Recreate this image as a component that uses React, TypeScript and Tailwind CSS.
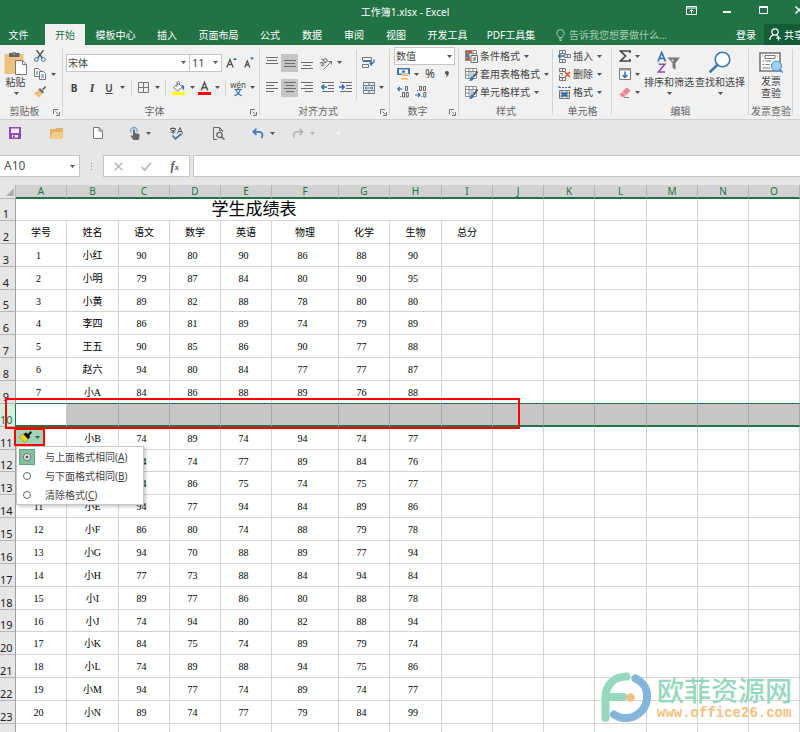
import type { ReactNode } from "react";

type Score = { row: number; id: number; name: string; marks: number[] };

const SCORES: Score[] = [
  { row: 3, id: 1, name: "小红", marks: [90, 80, 90, 86, 88, 90] },
  { row: 4, id: 2, name: "小明", marks: [79, 87, 84, 80, 90, 95] },
  { row: 5, id: 3, name: "小黄", marks: [89, 82, 88, 78, 80, 80] },
  { row: 6, id: 4, name: "李四", marks: [86, 81, 89, 74, 79, 89] },
  { row: 7, id: 5, name: "王五", marks: [90, 85, 86, 90, 77, 88] },
  { row: 8, id: 6, name: "赵六", marks: [94, 80, 84, 77, 77, 87] },
  { row: 9, id: 7, name: "小A", marks: [84, 86, 88, 89, 76, 88] },
  { row: 11, id: 8, name: "小B", marks: [74, 89, 74, 94, 74, 77] },
  { row: 12, id: 9, name: "小C", marks: [74, 74, 77, 89, 84, 76] },
  { row: 13, id: 10, name: "小D", marks: [74, 86, 75, 74, 75, 77] },
  { row: 14, id: 11, name: "小E", marks: [94, 77, 94, 84, 89, 86] },
  { row: 15, id: 12, name: "小F", marks: [86, 80, 74, 88, 79, 78] },
  { row: 16, id: 13, name: "小G", marks: [94, 70, 88, 89, 77, 94] },
  { row: 17, id: 14, name: "小H", marks: [77, 73, 88, 84, 94, 84] },
  { row: 18, id: 15, name: "小I", marks: [89, 77, 86, 80, 88, 78] },
  { row: 19, id: 16, name: "小J", marks: [74, 94, 80, 82, 88, 94] },
  { row: 20, id: 17, name: "小K", marks: [84, 75, 74, 89, 79, 74] },
  { row: 21, id: 18, name: "小L", marks: [74, 89, 88, 94, 75, 86] },
  { row: 22, id: 19, name: "小M", marks: [94, 77, 74, 89, 74, 77] },
  { row: 23, id: 20, name: "小N", marks: [89, 74, 77, 79, 84, 99] },
];

const COLUMNS = [
  { id: "A", w: "w-[51px]" },
  { id: "B", w: "w-[52px]" },
  { id: "C", w: "w-[51px]" },
  { id: "D", w: "w-[51px]" },
  { id: "E", w: "w-[51px]" },
  { id: "F", w: "w-[67px]" },
  { id: "G", w: "w-[51px]" },
  { id: "H", w: "w-[52px]" },
  { id: "I", w: "w-[51px]" },
  { id: "J", w: "w-[51px]" },
  { id: "K", w: "w-[51px]" },
  { id: "L", w: "w-[52px]" },
  { id: "M", w: "w-[51px]" },
  { id: "N", w: "w-[51px]" },
  { id: "O", w: "w-[51px]" },
];

const HEADINGS = ["学号", "姓名", "语文", "数学", "英语", "物理", "化学", "生物", "总分"];
const ROWS = Array.from({ length: 24 }, (_, i) => i + 1);
const SHORT_ROWS = [1, 5, 12, 19];
const SELECTED_ROW = 10;

const TABS = [
  { label: "文件", w: "w-[45px] pr-2" },
  { label: "开始", w: "w-[40px]", active: true },
  { label: "模板中心", w: "w-[61px]" },
  { label: "插入", w: "w-[42px]" },
  { label: "页面布局", w: "w-[61px]" },
  { label: "公式", w: "w-[42px]" },
  { label: "数据", w: "w-[42px]" },
  { label: "审阅", w: "w-[42px]" },
  { label: "视图", w: "w-[42px]" },
  { label: "开发工具", w: "w-[61px]" },
  { label: "PDF工具集", w: "w-[66px]" },
];

function Caret({ className = "text-[#555]" }: { className?: string }) {
  return (
    <svg width="5" height="3" viewBox="0 0 5 3" className={`shrink-0 ${className}`} aria-hidden="true">
      <path d="M0 0h5L2.5 3z" fill="currentColor" />
    </svg>
  );
}

function Tool({ label, w, on, children }: { label: string; w: string; on?: boolean; children: ReactNode }) {
  return (
    <button
      type="button"
      aria-label={label}
      className={`flex h-[18px] shrink-0 items-center justify-center ${w} ${on ? "bg-[#c5c5c5]" : ""}`}
    >
      {children}
    </button>
  );
}

function Divider({ w }: { w: string }) {
  return (
    <span className={`flex h-4 shrink-0 justify-center ${w}`}>
      <span className="w-px bg-[#d4d4d4]" />
    </span>
  );
}

function Group({
  title,
  w,
  launcher,
  children,
}: {
  title: string;
  w: string;
  launcher?: boolean;
  children: ReactNode;
}) {
  return (
    <section aria-label={title} className={`relative flex shrink-0 flex-col ${w}`}>
      <div className="h-[57px]">{children}</div>
      <div className="flex h-[17px] items-center text-[#666]">
        <span className="flex-1 text-center whitespace-nowrap">{title}</span>
        {launcher && (
          <button type="button" aria-label={`${title}设置`} className="flex w-[14px] justify-center pt-1">
            <svg width="7" height="7" viewBox="0 0 7 7" fill="none" stroke="#777">
              <path d="M.5 5V.5H5M2.5 2.5l3 3M6.5 3v3.500H3" />
            </svg>
          </button>
        )}
      </div>
      <span className="absolute top-1 right-0 bottom-1 w-px bg-[#d4d4d4]" />
    </section>
  );
}

function Lines({ widths, align }: { widths: number[]; align: "l" | "c" | "r" }) {
  return (
    <svg width="12" height="11" viewBox="0 0 12 11" stroke="#6b6b6b" aria-hidden="true">
      {widths.map((len, i) => {
        const x = align === "l" ? 0 : align === "r" ? 12 - len : (12 - len) / 2;
        return len ? <path key={i} d={`M${x} ${i * 3 + 0.5}h${len}`} /> : null;
      })}
    </svg>
  );
}

function GridIcon({ brush, hot }: { brush?: boolean; hot?: boolean }) {
  return (
    <svg width="13" height="13" viewBox="0 0 13 13" fill="none" aria-hidden="true">
      <path d="M.5.5h11v10H.5zM.5 3.500h11M.5 7h11M4 .5v10M8 .5v10" fill="#fff" stroke="#8a8a8a" />
      {hot && (
        <>
          <path d="M1 1h6v2H1z" fill="#d9502e" />
          <path d="M1 4h3v3H1z" fill="#3c78b8" />
          <path d="M1 7.500h4v2.500H1z" fill="#d9502e" />
          <path d="M6 5.500h6.500v7H6z" fill="#fff" stroke="#666" />
          <path d="M7.500 8h3.500M7.500 10h3.500M10.500 6.800l-2 4.500" stroke="#555" strokeWidth=".8" />
        </>
      )}
      {brush && (
        <>
          <path d="M4.500 4h5l-3 6h-2z" fill="#b7d2ec" />
          <path d="M12.500 3.500L8.500 9" stroke="#555" strokeWidth="1.800" />
          <path d="M4 12.800c2 .2 4.500-.3 5-2.800L7 8.300C5.500 9 6 11.500 4 12.800z" fill="#2f6fb3" />
        </>
      )}
    </svg>
  );
}

function CellsIcon({ kind }: { kind: "insert" | "delete" | "format" }) {
  if (kind === "format") {
    return (
      <svg width="13" height="13" viewBox="0 0 13 13" fill="none" aria-hidden="true">
        <path d="M1 1.500h11M1 0v3M12 0v3" stroke="#2f6fb3" strokeDasharray="2 1" />
        <path d="M1.500 4.500h10v8h-10zM1.500 7h10M1.500 10h10M4 4.500v8M9 4.500v8" stroke="#777" />
        <path d="M4 6.500h5v4H4z" fill="#2f6fb3" />
      </svg>
    );
  }
  return (
    <svg width="13" height="13" viewBox="0 0 13 13" fill="none" aria-hidden="true">
      <path d="M1.500.5h6v3h-6zM4.500.5v3M1.500 9.500h6v3h-6zM4.500 9.500v3M1.500 7v2.500" stroke="#777" />
      {kind === "insert" ? (
        <>
          <path d="M6.500 4.500h6v3h-6zM9.500 4.500v3" stroke="#777" />
          <path d="M0 6h6M2.500 3.800L.5 6l2 2.200" stroke="#2f6fb3" strokeWidth="1.300" />
        </>
      ) : (
        <>
          <path d="M1.500 5.500h3v2" stroke="#777" />
          <path d="M7 4l5 5M12 4L7 9" stroke="#d9502e" strokeWidth="1.500" />
        </>
      )}
    </svg>
  );
}

function RowButton({ icon, label }: { icon: ReactNode; label: string }) {
  return (
    <button type="button" className="flex h-[18px] items-center gap-[2px] whitespace-nowrap">
      {icon}
      <span>{label}</span>
      <span className="pl-[2px]">
        <Caret />
      </span>
    </button>
  );
}

function TitleBar() {
  return (
    <div className="flex h-6 items-center overflow-hidden text-white">
      <span className="w-[137px] shrink-0" />
      <h1 className="flex-1 text-center text-[10px]">工作簿1.xlsx - Excel</h1>
      <div className="-mr-[17px] flex shrink-0 pb-1">
        <Tool label="功能区显示选项" w="w-[36px]">
          <svg width="11" height="9" viewBox="0 0 11 9" fill="none" stroke="#fff">
            <path d="M.5.500h10v8H.5zM.5 2h10M5.500 7.500V4M3.500 5.500l2-2 2 2" />
          </svg>
        </Tool>
        <Tool label="最小化" w="w-[36px]">
          <svg width="8" height="6" viewBox="0 0 8 6">
            <path d="M0 4h8v2H0z" fill="#fff" />
          </svg>
        </Tool>
        <Tool label="最大化" w="w-[36px]">
          <svg width="9" height="8" viewBox="0 0 9 8" fill="none" stroke="#fff">
            <path d="M.5.500h8v7h-8zM.5 1.500h8" />
          </svg>
        </Tool>
        <Tool label="关闭" w="w-[36px]">
          <svg width="8" height="8" viewBox="0 0 8 8" stroke="#fff" strokeWidth="1.500">
            <path d="M.5.500l7 7M7.500.500l-7 7" />
          </svg>
        </Tool>
      </div>
    </div>
  );
}

function TabBar() {
  return (
    <nav className="flex h-[21px] items-stretch overflow-hidden text-white">
      {TABS.map((t) => (
        <button
          key={t.label}
          type="button"
          className={`shrink-0 whitespace-nowrap ${t.w} ${t.active ? "bg-[#f1f1f1] text-[#217346]" : ""}`}
        >
          {t.label}
        </button>
      ))}
      <label className="flex flex-1 items-center gap-1 pl-[12px]">
        <svg width="9" height="12" viewBox="0 0 9 12" fill="none" stroke="#a5cdb5">
          <path d="M2.800 8.500C2.800 7 .8 6.300.8 4.200a3.700 3.700 0 017.400 0c0 2.100-2 2.800-2 4.300zM3 10h3M3.500 11.500h2" />
        </svg>
        <input
          aria-label="操作说明搜索"
          placeholder="告诉我您想要做什么..."
          className="w-[120px] bg-transparent outline-none placeholder:text-[#a5cdb5]"
        />
      </label>
      <button type="button" className="w-[36px] shrink-0">
        登录
      </button>
      <button
        type="button"
        className="flex w-[36px] shrink-0 items-center gap-[3px] overflow-hidden bg-[#125c36] pl-[5px] whitespace-nowrap"
      >
        <svg width="12" height="13" viewBox="0 0 12 13" fill="none" stroke="#fff" strokeWidth="1.200" className="shrink-0">
          <circle cx="6" cy="4" r="3.200" />
          <path d="M.8 12c0-3 1.500-4.300 3.500-5M7.500 7.200l1.500 1M9.500 8v4.500M7.300 10.200h4.500" />
        </svg>
        <span>共享</span>
      </button>
    </nav>
  );
}

function ClipboardGroup() {
  return (
    <Group title="剪贴板" w="w-[63px]" launcher>
      <div className="flex pt-[2px]">
        <button type="button" className="flex w-[31px] flex-col items-center pt-1">
          <svg width="23" height="24" viewBox="0 0 23 24" aria-hidden="true">
            <path d="M.5 3h19v20H.5z" fill="#ecc27c" />
            <path d="M5 2h3.500a2 2 0 013.500 0h3.500v4H5z" fill="#666" />
            <path d="M9.500 2.500h1v1h-1z" fill="#fff" />
            <path d="M11.500 9.500h7l4 4v10h-11z" fill="#fff" stroke="#777" />
            <path d="M18.500 9.500v4h4" fill="none" stroke="#777" />
          </svg>
          <span className="leading-[14px]">粘贴</span>
          <span className="flex h-2 items-center pl-px">
            <Caret />
          </span>
        </button>
        <div className="flex flex-col">
          <Tool label="剪切" w="w-[18px]">
            <svg width="12" height="12" viewBox="0 0 12 12" fill="none">
              <path d="M2.500 0l5.800 8M9.500 0L3.700 8" stroke="#555" strokeWidth="1.400" />
              <circle cx="2.500" cy="9.500" r="1.900" stroke="#2f6fb3" />
              <circle cx="9.300" cy="9.500" r="1.900" stroke="#2f6fb3" />
            </svg>
          </Tool>
          <div className="flex items-center">
            <Tool label="复制" w="w-[18px]">
              <svg width="12" height="12" viewBox="0 0 12 12" fill="#fff" stroke="#777">
                <path d="M.5.500h4l2 2v6h-6z" />
                <path d="M5.500 3.500h4l2 2v6h-6z" />
                <path d="M2 4h2M2 6h2M7 7h3M7 9h3" stroke="#2f6fb3" />
              </svg>
            </Tool>
            <span className="pl-[2px]">
              <Caret />
            </span>
          </div>
          <Tool label="格式刷" w="w-[18px]">
            <svg width="12" height="12" viewBox="0 0 12 12">
              <path d="M0 7l5-3 3.500 3.500L4.500 12z" fill="#ecc27c" />
              <path d="M4.500 3.500L6 2l4 4-1.500 1.500zM8 3l3-3 1.200 1.200-3 3z" fill="#666" />
            </svg>
          </Tool>
        </div>
      </div>
    </Group>
  );
}

function FontGroup() {
  return (
    <Group title="字体" w="w-[197px]" launcher>
      <div className="flex flex-col pt-[5px]">
        <div className="flex h-[25px] items-center pl-[3px]">
          <span className="flex h-[18px] w-[124px] items-center border border-[#c6c6c6] bg-white pr-[3px]">
            <select aria-label="字体" defaultValue="宋体" className="min-w-0 flex-1 appearance-none pl-px outline-none">
              <option>宋体</option>
            </select>
            <Caret />
          </span>
          <span className="flex h-[18px] w-[32px] items-center border border-l-0 border-[#c6c6c6] bg-white pr-[3px]">
            <select aria-label="字号" defaultValue="11" className="min-w-0 flex-1 appearance-none pl-[2px] text-[11px] outline-none">
              <option>11</option>
            </select>
            <Caret />
          </span>
          <Tool label="增大字号" w="w-[18px]">
            <svg width="11" height="11" viewBox="0 0 11 11" fill="none">
              <path d="M.8 10.500L4 2.500l3.200 8M2 7.500h4" stroke="#555" strokeWidth="1.300" />
              <path d="M7 3l2-2.500L11 3z" fill="#2f6fb3" />
            </svg>
          </Tool>
          <Tool label="减小字号" w="w-[18px]">
            <svg width="10" height="11" viewBox="0 0 10 11" fill="none">
              <path d="M.8 10.500l2.500-6.500 2.500 6.500M1.500 8h3.500" stroke="#555" strokeWidth="1.300" />
              <path d="M6 .5h4L8 3z" fill="#2f6fb3" />
            </svg>
          </Tool>
        </div>
        <div className="flex h-[25px] items-center pl-[2px]">
          <Tool label="加粗" w="w-[18px]">
            <b>B</b>
          </Tool>
          <Tool label="倾斜" w="w-[18px]">
            <i className="font-['Liberation_Serif',serif] text-[12px] font-bold">I</i>
          </Tool>
          <Tool label="下划线" w="w-[16px]">
            <u className="font-semibold">U</u>
          </Tool>
          <Tool label="下划线类型" w="w-[10px]">
            <Caret />
          </Tool>
          <Divider w="w-[8px]" />
          <Tool label="边框" w="w-[16px]">
            <svg width="11" height="11" viewBox="0 0 11 11" fill="none" stroke="#777">
              <path d="M.5.500h10v10H.5zM5.500.500v10M.5 5.500h10" />
            </svg>
          </Tool>
          <Tool label="边框类型" w="w-[12px]">
            <Caret />
          </Tool>
          <Divider w="w-[5px]" />
          <Tool label="填充颜色" w="w-[20px]">
            <svg width="13" height="14" viewBox="0 0 13 14" fill="none">
              <path d="M6 2.500L1.500 6.500l4 3.500 5-4z" fill="#fff" stroke="#777" />
              <path d="M5 6V2c0-2 2.500-2 2.500 0v2" stroke="#777" />
              <path d="M10 4c2 0 2.500 2 2 5-1 0-1.500-2-2-3z" fill="#2f6fb3" />
              <path d="M0 11h13v3H0z" fill="#ff0" />
            </svg>
          </Tool>
          <Tool label="填充颜色选项" w="w-[8px]">
            <Caret />
          </Tool>
          <Tool label="字体颜色" w="w-[16px]">
            <svg width="13" height="14" viewBox="0 0 13 14" fill="none">
              <path d="M3.200 9.500l3.300-8 3.300 8M4.500 6.800h4" stroke="#555" strokeWidth="1.500" />
              <path d="M0 11h13v3H0z" fill="#f00" />
            </svg>
          </Tool>
          <Tool label="字体颜色选项" w="w-[10px]">
            <Caret />
          </Tool>
          <Divider w="w-[6px]" />
          <Tool label="拼音指南" w="w-[20px]">
            <span className="flex flex-col items-center text-[8px] leading-[7px]">
              <span>wén</span>
              <span className="font-bold text-[#2f6fb3]">文</span>
            </span>
          </Tool>
          <Tool label="拼音选项" w="w-[8px]">
            <Caret />
          </Tool>
        </div>
      </div>
    </Group>
  );
}

function IndentIcon({ out }: { out?: boolean }) {
  return (
    <svg width="13" height="11" viewBox="0 0 13 11" fill="none" aria-hidden="true">
      <path d="M1 .5h12M7 3.500h6M7 6.500h6M1 9.500h12" stroke="#6b6b6b" />
      <path d={out ? "M6 5H1M3 2.500L.8 5 3 7.500" : "M0 5h5M3 2.500L5.200 5 3 7.500"} stroke="#2f6fb3" strokeWidth="1.500" />
    </svg>
  );
}

function AlignGroup() {
  return (
    <Group title="对齐方式" w="w-[130px]" launcher>
      <div className="flex pt-[5px]">
        <div className="flex w-[96px] flex-col pl-[3px]">
          <div className="flex h-[25px] items-center">
            <Tool label="顶端对齐" w="w-[18px]">
              <Lines widths={[12, 10, 12, 0]} align="c" />
            </Tool>
            <Tool label="垂直居中" w="w-[17px]" on>
              <Lines widths={[0, 12, 10, 12]} align="c" />
            </Tool>
            <Tool label="底端对齐" w="w-[17px]">
              <svg width="12" height="12" viewBox="0 0 12 12" stroke="#6b6b6b">
                <path d="M0 5.500h12M2 8.500h8M0 11.500h12" />
              </svg>
            </Tool>
            <Tool label="方向" w="w-[22px]">
              <svg width="14" height="14" viewBox="0 0 14 14" fill="none">
                <path d="M4.500 13.500L12.500 5.500M9.500 5.500h3v3" stroke="#777" />
                <text x="0" y="8" fontSize="8" fill="#444" transform="rotate(-45 5 6)">
                  ab
                </text>
              </svg>
            </Tool>
            <Caret />
          </div>
          <div className="flex h-[25px] items-center">
            <Tool label="左对齐" w="w-[18px]">
              <Lines widths={[12, 8, 12, 8]} align="l" />
            </Tool>
            <Tool label="居中" w="w-[17px]" on>
              <Lines widths={[12, 8, 12, 8]} align="c" />
            </Tool>
            <Tool label="右对齐" w="w-[17px]">
              <Lines widths={[12, 8, 12, 8]} align="r" />
            </Tool>
            <Tool label="减少缩进量" w="w-[24px]">
              <IndentIcon out />
            </Tool>
            <Tool label="增加缩进量" w="w-[13px]">
              <IndentIcon />
            </Tool>
          </div>
        </div>
        <div className="flex-1 border-l border-[#d4d4d4]">
          <div className="flex h-[25px] items-center pl-[3px]">
            <Tool label="自动换行" w="w-[17px]">
              <svg width="13" height="13" viewBox="0 0 13 13" fill="none">
                <path d="M.5 1.500h9v3h-9zM.5 8.500h6v3h-6z" stroke="#777" />
                <path d="M1 5.500h8" stroke="#2f6fb3" />
                <path d="M12 3.500c.5 3.500-1 4-3.500 4M10 5.500l-2 2 2 2" stroke="#2f6fb3" strokeWidth="1.300" />
              </svg>
            </Tool>
          </div>
          <div className="flex h-[25px] items-center pl-[3px]">
            <Tool label="合并后居中" w="w-[17px]">
              <svg width="12" height="12" viewBox="0 0 12 12" fill="none">
                <path d="M.5.500h11v11H.5zM.5 3.500h11M.5 8.500h11M6 .5v3M6 8.500v3" stroke="#777" />
                <path d="M2 6h8M3.500 4.500L2 6l1.500 1.500M8.500 4.500L10 6 8.500 7.500" stroke="#2f6fb3" />
              </svg>
            </Tool>
            <span className="pl-[2px]">
              <Caret />
            </span>
          </div>
        </div>
      </div>
    </Group>
  );
}

function NumberGroup() {
  return (
    <Group title="数字" w="w-[69px]" launcher>
      <div className="flex flex-col px-1 pt-[2px]">
        <span className="flex h-[18px] items-center border border-[#c6c6c6] bg-white pr-[2px]">
          <select aria-label="数字格式" defaultValue="数值" className="min-w-0 flex-1 appearance-none pl-px outline-none">
            <option>数值</option>
          </select>
          <Caret />
        </span>
        <div className="flex items-center">
          <Tool label="会计数字格式" w="w-[18px]">
            <svg width="13" height="13" viewBox="0 0 13 13">
              <path d="M0 0h13v7H0z" fill="#3c78b8" />
              <path d="M2 1.500h9v4H2z" fill="#fff" />
              <circle cx="6.500" cy="3.500" r="1.500" fill="#3c78b8" />
              <path d="M5 6h7v2.500H5zM4 9.500h7V12H4z" fill="#ecb968" stroke="#fff" strokeWidth=".6" />
            </svg>
          </Tool>
          <Tool label="货币选项" w="w-[8px]">
            <Caret />
          </Tool>
          <Tool label="百分比样式" w="w-[20px]">
            <span className="text-[12px]">%</span>
          </Tool>
          <Tool label="千位分隔样式" w="w-[14px]">
            <svg width="4" height="7" viewBox="0 0 4 7">
              <path d="M2 0a1.800 1.800 0 011.800 2C3.800 4 2.500 5.800.5 6.500c1-1 1.300-2 1.200-2.800A1.800 1.800 0 012 0z" fill="#555" />
            </svg>
          </Tool>
        </div>
        <div className="flex items-center">
          {["增加小数位数", "减少小数位数"].map((label, i) => (
            <Tool key={label} label={label} w="w-[18px]">
              <svg width="12" height="12" viewBox="0 0 12 12" fill="none">
                {i === 0 ? (
                  <>
                    <path d="M5.500 3H.8M2.800 1L.8 3l2 2" stroke="#2f6fb3" strokeWidth="1.200" />
                    <path d="M8.500.500h2v4h-2zM5.500 6.500h2v4.500h-2zM9.300 6.500h2V11h-2zM3.200 10.500h1" stroke="#666" />
                  </>
                ) : (
                  <>
                    <path d="M0 9h5M3 7l2 2-2 2" stroke="#2f6fb3" strokeWidth="1.200" />
                    <path d="M4.500.500h2v4h-2zM8.500.500h2v4h-2zM8.800 6.500h2V11h-2zM2 4.500h1M6.500 10.500h1" stroke="#666" />
                  </>
                )}
              </svg>
            </Tool>
          ))}
        </div>
      </div>
    </Group>
  );
}

function EditingGroup() {
  return (
    <Group title="编辑" w="w-[137px]">
      <div className="flex pt-[2px]">
        <div className="flex w-[31px] flex-col pl-1">
          <div className="flex items-center gap-px">
            <Tool label="自动求和" w="w-[18px]">
              <svg width="12" height="12" viewBox="0 0 12 12" fill="none" stroke="#444" strokeWidth="1.700">
                <path d="M11 3V1H1.500l5 5-5 5H11V9" />
              </svg>
            </Tool>
            <Caret />
          </div>
          <div className="flex items-center gap-px">
            <Tool label="填充" w="w-[18px]">
              <svg width="12" height="12" viewBox="0 0 12 12" fill="none">
                <path d="M.5.500h11v11H.5z" fill="#fff" stroke="#777" />
                <path d="M.5.500h11v2H.5z" fill="#999" />
                <path d="M6 3.500v6M3.500 7L6 9.500 8.500 7" stroke="#2f6fb3" strokeWidth="1.500" />
              </svg>
            </Tool>
            <Caret />
          </div>
          <div className="flex items-center gap-px">
            <Tool label="清除" w="w-[18px]">
              <svg width="12" height="11" viewBox="0 0 12 11">
                <path d="M3.500 4.500l4-4 4 3-4.500 5z" fill="#e8829a" />
                <path d="M3 5l3.500 3.800L5 10H2.500L.5 7.500z" fill="#e8829a" stroke="#f7c6d0" strokeWidth=".5" />
                <path d="M5 10.500h5" stroke="#888" />
              </svg>
            </Tool>
            <Caret />
          </div>
        </div>
        <button type="button" className="flex w-[52px] flex-col items-center pt-1 whitespace-nowrap">
          <svg width="24" height="24" viewBox="0 0 24 24" fill="none" aria-hidden="true">
            <path d="M1 10.500L4.700 1.500l3.800 9M2.300 7.500h4.800" stroke="#2f6fb3" strokeWidth="1.600" />
            <path d="M1.800 13.300h6L1.500 21h6.700" stroke="#8a4fb0" strokeWidth="1.600" />
            <path d="M10.500 6.500H23l-4.500 5.500v7l-3-2.500V12z" fill="#777" />
            <path d="M14 8.500h3l-1 2.500z" fill="#ddd" />
          </svg>
          <span className="leading-[14px]">排序和筛选</span>
          <span className="flex h-2 items-center">
            <Caret />
          </span>
        </button>
        <button type="button" className="flex w-[50px] flex-col items-center pt-1 whitespace-nowrap">
          <svg width="22" height="24" viewBox="0 0 22 24" fill="none" aria-hidden="true">
            <circle cx="13.500" cy="8.500" r="7.300" fill="#fff" stroke="#3c78b8" strokeWidth="1.600" />
            <path d="M8.300 14L1.500 20.500" stroke="#3c78b8" strokeWidth="2.600" strokeLinecap="round" />
          </svg>
          <span className="leading-[14px]">查找和选择</span>
          <span className="flex h-2 items-center">
            <Caret />
          </span>
        </button>
      </div>
    </Group>
  );
}

function Ribbon() {
  return (
    <div className="flex h-[75px] overflow-hidden border-b border-[#d0d0d0] bg-[#f1f1f1] text-[#444]">
      <ClipboardGroup />
      <FontGroup />
      <AlignGroup />
      <NumberGroup />
      <Group title="样式" w="w-[94px]">
        <div className="flex flex-col pt-[2px] pl-[6px]">
          <RowButton icon={<GridIcon hot />} label="条件格式" />
          <RowButton icon={<GridIcon brush />} label="套用表格格式" />
          <RowButton icon={<GridIcon brush />} label="单元格样式" />
        </div>
      </Group>
      <Group title="单元格" w="w-[59px]">
        <div className="flex flex-col pt-[2px] pl-[5px]">
          <RowButton icon={<CellsIcon kind="insert" />} label="插入" />
          <RowButton icon={<CellsIcon kind="delete" />} label="删除" />
          <RowButton icon={<CellsIcon kind="format" />} label="格式" />
        </div>
      </Group>
      <EditingGroup />
      <Group title="发票查验" w="w-[44px]">
        <button type="button" className="flex w-full flex-col items-center pt-[6px]">
          <svg width="24" height="24" viewBox="0 0 24 24" fill="none" aria-hidden="true">
            <path d="M1 2h20v18H1z" fill="#fff" stroke="#777" strokeWidth="1.600" />
            <path d="M6 4.500h10v3H6z" stroke="#777" />
            <path d="M3.500 4.500v1M18.500 4.500v1M3.500 10h1.500M6.500 10h6M3.500 13.500h1.500M6.500 13.500h4M3.500 17h8" stroke="#777" />
            <circle cx="17.500" cy="15" r="5" fill="#9fd0f5" stroke="#3f8fd0" />
            <path d="M21 18.500l3 3" stroke="#3f8fd0" strokeWidth="1.500" />
          </svg>
          <span className="leading-[12px]">
            发票
            <br />
            查验
          </span>
        </button>
      </Group>
    </div>
  );
}

function QuickAccess() {
  return (
    <div className="flex h-[26px] items-center pl-[6px]">
      <Tool label="保存" w="w-[18px]">
        <svg width="12" height="12" viewBox="0 0 12 12">
          <path d="M0 0h12v12H0z" fill="#8a4fb0" />
          <path d="M2 1.500h8v4.500H2zM3 8h6v2.500H3z" fill="#f3ecf8" />
          <path d="M4 8.500h2v2H4z" fill="#8a4fb0" />
        </svg>
      </Tool>
      <span className="w-[23px]" />
      <Tool label="打开" w="w-[20px]">
        <svg width="14" height="11" viewBox="0 0 14 11">
          <path d="M0 1h5l1-1h7v10H0z" fill="#e2b36a" />
          <path d="M3 4h11l-2.500 7H0z" fill="#f5cd8b" />
        </svg>
      </Tool>
      <span className="w-[22px]" />
      <Tool label="新建" w="w-[18px]">
        <svg width="10" height="12" viewBox="0 0 10 12" fill="#fff" stroke="#777">
          <path d="M.5.500h5.500l3.500 3.500v7.500h-9zM6 .5V4h3.500" />
        </svg>
      </Tool>
      <span className="w-[19px]" />
      <Tool label="触摸模式" w="w-[18px]">
        <svg width="10" height="13" viewBox="0 0 10 13" fill="none">
          <path d="M1 5.500C-.5 2.500 2 .5 4 .5s4 1.500 3 4.500" stroke="#6fa8d8" strokeWidth="1.300" />
          <path d="M3 2.500h2V6l4.500 1v3.500L8.500 13h-5L.5 9l1-1L3 9z" fill="#666" />
        </svg>
      </Tool>
      <Tool label="触摸模式选项" w="w-[8px]">
        <Caret />
      </Tool>
      <span className="w-[15px]" />
      <Tool label="拼写检查" w="w-[18px]">
        <svg width="13" height="13" viewBox="0 0 13 13" fill="none">
          <path d="M.5 3V1.500h5V3M3 0v1.500M1.500 3.500h3L3 5v2M.5 5h5M7.500 6.500L10 .5l2.500 6M8.500 4.500h3" stroke="#555" />
          <path d="M2.500 8.500l3 3.300 6-5" stroke="#3c78b8" strokeWidth="1.800" />
        </svg>
      </Tool>
      <span className="w-[25px]" />
      <Tool label="打印预览" w="w-[18px]">
        <svg width="12" height="13" viewBox="0 0 12 13" fill="none" stroke="#666">
          <path d="M4 12.500H.5V.5h6l3 3V5M6.500.500v3h3" />
          <circle cx="6.500" cy="8" r="2.700" strokeWidth="1.300" />
          <path d="M8.500 10l3 2.500" strokeWidth="1.600" />
        </svg>
      </Tool>
      <span className="w-[20px]" />
      <Tool label="撤消" w="w-[20px]">
        <svg width="12" height="11" viewBox="0 0 12 11" fill="none" stroke="#3c78b8" strokeWidth="1.700">
          <path d="M4.500.700L1.300 3.800l3.200 3M1.500 3.800h5.500c3 0 4.500 3 2.500 6.200" />
        </svg>
      </Tool>
      <Tool label="撤消列表" w="w-[8px]">
        <Caret />
      </Tool>
      <span className="w-[12px]" />
      <Tool label="恢复" w="w-[20px]">
        <svg width="12" height="11" viewBox="0 0 12 11" fill="none" stroke="#b0b0b0" strokeWidth="1.500">
          <path d="M7.500.700l3.200 3.100-3.200 3M10.500 3.800H5C2 3.800.5 6.800 2.500 10" />
        </svg>
      </Tool>
      <Tool label="恢复列表" w="w-[8px]">
        <Caret className="text-[#b5b5b5]" />
      </Tool>
      <span className="w-[18px]" />
      <Tool label="自定义快速访问工具栏" w="w-[8px]">
        <Caret className="text-[#f7f7f7]" />
      </Tool>
    </div>
  );
}

function FormulaBar() {
  return (
    <div className="flex h-[39px] items-center pt-px">
      <div className="flex h-[22px] w-[80px] shrink-0 items-center border border-l-0 border-[#c6c6c6] bg-white pr-1">
        <input aria-label="名称框" defaultValue="A10" className="min-w-0 flex-1 pl-1 text-[12px] text-[#555] outline-none" />
        <Caret />
      </div>
      <span className="flex w-[23px] shrink-0 flex-col items-center gap-[2px]">
        <span className="h-px w-px bg-[#888]" />
        <span className="h-px w-px bg-[#888]" />
        <span className="h-px w-px bg-[#888]" />
      </span>
      <div className="flex h-[22px] w-[87px] shrink-0 items-center justify-around border border-[#c6c6c6] bg-white">
        <Tool label="取消" w="w-[24px]">
          <svg width="9" height="9" viewBox="0 0 9 9" stroke="#b5b5b5" strokeWidth="1.400">
            <path d="M.7.700l7.600 7.600M8.300.700L.7 8.300" />
          </svg>
        </Tool>
        <Tool label="输入" w="w-[24px]">
          <svg width="11" height="9" viewBox="0 0 11 9" fill="none" stroke="#b5b5b5" strokeWidth="1.700">
            <path d="M.7 5l3 3L10 .7" />
          </svg>
        </Tool>
        <Tool label="插入函数" w="w-[24px]">
          <i className="font-['Liberation_Serif',serif] text-[12px] font-bold text-[#555]">
            f<span className="text-[9px]">x</span>
          </i>
        </Tool>
      </div>
      <input
        aria-label="编辑栏"
        className="ml-[3px] h-[22px] min-w-0 flex-1 border border-r-0 border-[#c6c6c6] bg-white px-1 text-[12px] outline-none"
      />
    </div>
  );
}

function cellText(row: number, col: number) {
  if (row === 2) return HEADINGS[col] ?? "";
  const score = SCORES.find((s) => s.row === row);
  if (!score) return "";
  if (col === 0) return String(score.id);
  if (col === 1) return score.name;
  return String(score.marks[col - 2] ?? "");
}

function cellTone(row: number, col: number) {
  if (row === SELECTED_ROW) {
    const bottom = "border-b-2 border-b-[#217346]";
    return col === 0
      ? `${bottom} border-r border-r-[#c6c6c6] bg-white`
      : `${bottom} border-r border-r-[#a9a9a9] bg-[#c6c6c6]`;
  }
  if (row === SELECTED_ROW - 1) return "border-r border-b border-r-[#d4d4d4] border-b-[#217346]";
  return "border-r border-b border-[#d4d4d4]";
}

function SheetRow({ row }: { row: number }) {
  const selected = row === SELECTED_ROW;
  return (
    <tr className={SHORT_ROWS.includes(row) ? "h-[22px]" : "h-[23px]"}>
      <th
        scope="row"
        className={`border-r border-b p-0 pr-[3px] text-center align-bottom font-['Noto_Sans',sans-serif] text-[11px] leading-[13px] font-normal ${
          selected
            ? "border-r-[#217346] border-b-[#b5b5b5] bg-[#d2efdf] text-[#217346]"
            : "border-r-[#9f9f9f] border-b-[#b5b5b5] bg-[#e6e6e6] text-[#222]"
        }`}
      >
        {row}
      </th>
      {row === 1 && (
        <td colSpan={9} className="border-r border-b border-[#d4d4d4] p-0 pt-px text-center text-[17px] leading-[20px]">
          学生成绩表
        </td>
      )}
      {COLUMNS.map((c, i) => {
        if (row === 1 && i < 9) return null;
        const text = cellText(row, i);
        const numeric = /^\d+$/.test(text);
        return (
          <td key={c.id} className={`p-0 pt-[2px] text-center ${numeric ? "pr-[5px]" : ""} ${cellTone(row, i)}`}>
            {text}
          </td>
        );
      })}
    </tr>
  );
}

function InsertOptions() {
  const options = [
    { label: "与上面格式相同", accel: "A" },
    { label: "与下面格式相同", accel: "B" },
    { label: "清除格式", accel: "C" },
  ];
  return (
    <div className="absolute top-[243px] left-[14px]">
      <button
        type="button"
        aria-label="插入选项"
        className="flex h-[18px] w-[31px] items-center gap-[3px] border-2 border-[#f00] bg-[#9fd5b7] pl-[3px]"
      >
        <svg width="13" height="13" viewBox="0 0 13 13" aria-hidden="true">
          <path d="M0 6l4-3 5 5-3 4z" fill="#f5d020" stroke="#8a7a10" strokeWidth=".5" />
          <path d="M4.500 3l2.500-1.500L9 3l2.500-3L13 1.500 10.500 4.500l.5 2L9 8z" fill="#111" />
        </svg>
        <Caret />
      </button>
      <fieldset className="ml-[2px] flex w-[128px] flex-col border border-[#c6c6c6] bg-white shadow-[2px_2px_3px_rgba(0,0,0,0.2)]">
        <legend className="sr-only">插入选项</legend>
        {options.map((o, i) => (
          <label key={o.accel} className="flex h-[19px] items-center pl-[2px] whitespace-nowrap text-[#444]">
            <span
              className={`flex h-4 w-4 items-center justify-center ${i === 0 ? "border border-[#5fa57f] bg-[#86bfa0]" : ""}`}
            >
              <input
                type="radio"
                name="insert-format"
                defaultChecked={i === 0}
                className="h-[8px] w-[8px] appearance-none rounded-full border border-[#666] bg-white checked:bg-[radial-gradient(circle,#555_1px,#fff_2px)]"
              />
            </span>
            <span className="pl-[10px]">
              {o.label}(<u>{o.accel}</u>)
            </span>
          </label>
        ))}
      </fieldset>
    </div>
  );
}

function Watermark() {
  return (
    <div className="pointer-events-none absolute right-[8px] bottom-[9px] flex items-center gap-[5px]">
      <svg width="51" height="51" viewBox="0 0 51 51" fill="none" strokeWidth="8" strokeLinecap="round" aria-hidden="true">
        <path d="M4.500 46V25C4.500 13 13 4.500 25.500 4.500M5 25h17" stroke="#96d8bd" />
        <path d="M34.500 6.500C43 10.500 47 18 46 27c-1.500 12-12 20-24 19-3-.3-6-1.500-9-3.500" stroke="#85b5d9" />
        <circle cx="29.500" cy="25.500" r="4.200" fill="#f2c080" />
      </svg>
      <div className="flex flex-col">
        <span className="text-[27px] leading-[30px] font-medium text-[#96d8bd]">欧菲资源网</span>
        <span className="font-['Liberation_Mono',monospace] text-[14px] leading-[14px] font-bold text-[#f2c080]">
          www.office26.com
        </span>
      </div>
    </div>
  );
}

function Sheet() {
  return (
    <main className="relative min-h-0 flex-1 overflow-hidden bg-white">
      <table className="w-full table-fixed border-separate border-spacing-0 font-['Liberation_Serif','Noto_Sans_CJK_SC',serif] text-[10px] leading-[14px] text-black">
        <colgroup>
          <col className="w-[16px]" />
          {COLUMNS.map((c) => (
            <col key={c.id} className={c.w} />
          ))}
        </colgroup>
        <thead>
          <tr className="h-[14px] font-['Noto_Sans',sans-serif] text-[#217346]">
            <td className="border-r border-b border-[#b5b5b5] bg-[#e6e6e6] p-0">
              <svg width="8" height="8" viewBox="0 0 8 8" className="ml-[6px]" aria-hidden="true">
                <path d="M8 0v8H0z" fill="#b0b0b0" />
              </svg>
            </td>
            {COLUMNS.map((c) => (
              <th
                key={c.id}
                scope="col"
                className="border-r border-b-2 border-r-[#b5b5b5] border-b-[#217346] bg-[#d2d2d2] p-0 text-center text-[10px] leading-[12px] font-normal"
              >
                {c.id}
              </th>
            ))}
          </tr>
        </thead>
        <tbody>
          {ROWS.map((row) => (
            <SheetRow key={row} row={row} />
          ))}
        </tbody>
      </table>
      <span className="absolute top-[240px] left-[15px] h-[3px] w-[3px] bg-[#217346]" />
      <span className="absolute top-[213px] left-[5px] h-[31px] w-[515px] border-2 border-[#f00]" />
      <InsertOptions />
      <Watermark />
    </main>
  );
}

export default function App() {
  return (
    <div
      lang="zh-CN"
      className="flex h-screen flex-col overflow-hidden bg-[#e6e6e6] font-['Noto_Sans','Noto_Sans_CJK_SC',sans-serif] text-[10px] leading-[14px]"
    >
      <header className="bg-[#217346]">
        <TitleBar />
        <TabBar />
      </header>
      <Ribbon />
      <QuickAccess />
      <FormulaBar />
      <Sheet />
    </div>
  );
}
